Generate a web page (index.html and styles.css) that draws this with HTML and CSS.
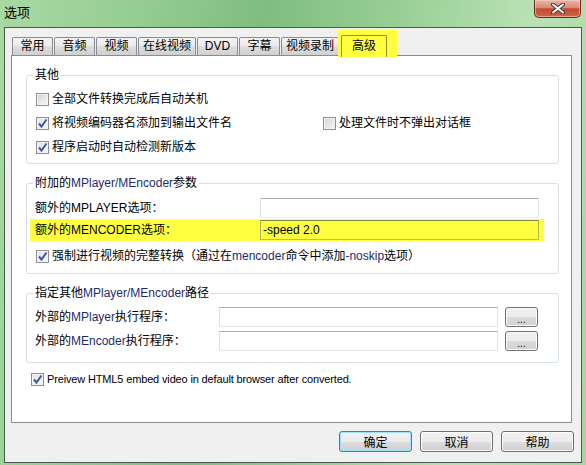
FILE: index.html
```html
<!DOCTYPE html>
<html lang="zh-CN">
<head>
  <meta charset="UTF-8" />
  <title>选项</title>
  <link rel="stylesheet" href="styles.css">
</head>
<body>
  <div class="window">
    <div class="titlebar">
      <span class="title">选项</span>
      <button class="close" aria-label="关闭">
        <svg width="14" height="11" viewBox="0 0 14 11">
          <path d="M2 1.5 L12 9.5 M12 1.5 L2 9.5" stroke="#3d3d3d" stroke-width="4" stroke-linecap="round"/>
          <path d="M2 1.5 L12 9.5 M12 1.5 L2 9.5" stroke="#fff" stroke-width="2" stroke-linecap="round"/>
        </svg>
      </button>
    </div>

    <div class="client">
      <div class="tabs">
        <span class="tab">常用</span>
        <span class="tab">音频</span>
        <span class="tab">视频</span>
        <span class="tab">在线视频</span>
        <span class="tab">DVD</span>
        <span class="tab">字幕</span>
        <span class="tab">视频录制</span>
        <span class="tab-hl"><span class="tab active">高级</span></span>
      </div>

      <div class="page">
        <fieldset class="group group-other">
          <legend>其他</legend>
          <label class="check"><span class="cb"></span>全部文件转换完成后自动关机</label>
          <div class="two-col">
            <label class="check"><span class="cb on"><svg width="11" height="11" viewBox="0 0 11 11"><path d="M2 5.5 L4.5 8.5 L9.5 1.5" fill="none" stroke="#3a5ba0" stroke-width="2"/></svg></span>将视频编码器名添加到输出文件名</label>
            <label class="check"><span class="cb"></span>处理文件时不弹出对话框</label>
          </div>
          <label class="check"><span class="cb on"><svg width="11" height="11" viewBox="0 0 11 11"><path d="M2 5.5 L4.5 8.5 L9.5 1.5" fill="none" stroke="#3a5ba0" stroke-width="2"/></svg></span>程序启动时自动检测新版本</label>
        </fieldset>

        <fieldset class="group group-args">
          <legend>附加的<span class="lat">MPlayer/MEncoder</span>参数</legend>
          <div class="opt-row">
            <span>额外的MPLAYER选项：</span>
            <input class="field" type="text" value="">
          </div>
          <div class="opt-row hl">
            <span>额外的MENCODER选项：</span>
            <input class="field" type="text" value="-speed 2.0">
          </div>
          <label class="check check-gap"><span class="cb on"><svg width="11" height="11" viewBox="0 0 11 11"><path d="M2 5.5 L4.5 8.5 L9.5 1.5" fill="none" stroke="#3a5ba0" stroke-width="2"/></svg></span><span>强制进行视频的完整转换（通过在<span class="lat">mencoder</span>命令中添加<span class="lat">-noskip</span>选项）</span></label>
        </fieldset>

        <fieldset class="group group-paths">
          <legend>指定其他<span class="lat">MPlayer/MEncoder</span>路径</legend>
          <div class="path-row">
            <span class="path-label">外部的<span class="lat">MPlayer</span>执行程序：</span>
            <input class="field" type="text" value="">
            <button class="browse">...</button>
          </div>
          <div class="path-row">
            <span class="path-label">外部的<span class="lat">MEncoder</span>执行程序：</span>
            <input class="field" type="text" value="">
            <button class="browse">...</button>
          </div>
        </fieldset>

        <label class="check preview"><span class="cb on"><svg width="11" height="11" viewBox="0 0 11 11"><path d="M2 5.5 L4.5 8.5 L9.5 1.5" fill="none" stroke="#3a5ba0" stroke-width="2"/></svg></span>Preivew HTML5 embed video in default browser after converted.</label>
      </div>

      <div class="actions">
        <button class="btn default">确定</button>
        <button class="btn">取消</button>
        <button class="btn">帮助</button>
      </div>
    </div>
  </div>
</body>
</html>
```

FILE: styles.css
```css
* {
  margin: 0;
  padding: 0;
  box-sizing: border-box;
}

body {
  width: 586px;
  height: 465px;
  overflow: hidden;
  font-family: "Liberation Sans", "Noto Sans CJK SC", sans-serif;
  font-size: 12px;
  line-height: 14px;
  color: #000;
  background: linear-gradient(100deg, #a9d9a3 0%, #94cc91 22%, #7fbd80 40%, #98cf95 60%, #b9e2b4 80%, #a4d69f 100%);
}

.window {
  display: flex;
  flex-direction: column;
  height: 465px;
}

/* title bar */
.titlebar {
  height: 27px;
  display: flex;
  justify-content: space-between;
  align-items: flex-start;
  padding: 0 5px 0 4px;
}

.title {
  margin-top: 5px;
  font-size: 13px;
  font-family: "Noto Sans CJK SC", sans-serif;
}

.close {
  width: 47px;
  height: 18px;
  border: 1px solid #6e2a1f;
  border-top: none;
  border-radius: 0 0 5px 5px;
  background: linear-gradient(#eab4a7, #dc8a74 45%, #c4492f 52%, #d0654a 100%);
  box-shadow: inset 0 0 0 1px rgba(255, 220, 210, 0.5);
  display: flex;
  align-items: center;
  justify-content: center;
}

/* client area */
.client {
  flex: 1;
  margin: 0 4px 2px;
  border: 1px solid #4b5a4e;
  background: #f0f0f0;
  padding: 2px 0 0 6px;
  display: flex;
  flex-direction: column;
}

.tabs {
  display: flex;
  align-items: flex-end;
  height: 25px;
  padding-left: 1px;
  gap: 1px;
}

.tab {
  height: 18px;
  min-width: 41px;
  padding: 0 4px;
  border: 1px solid #898c95;
  border-bottom: none;
  border-radius: 2px 2px 0 0;
  background: linear-gradient(#f3f3f3, #ebebeb 45%, #dedede 50%, #d0d0d0);
  text-align: center;
  line-height: 17px;
}

.tab-hl {
  position: relative;
  z-index: 1;
  height: 27px;
  margin: 0 0 -2px -2px;
  padding: 0 10px 0 3px;
  background: #ffff40;
  display: flex;
  align-items: flex-end;
}

.tab.active {
  height: 22px;
  min-width: 46px;
  background: transparent;
  border-color: #8f8f2a;
  line-height: 20px;
}

.page {
  width: 561px;
  height: 368px;
  border: 1px solid #898c95;
  background: #fff;
  padding-left: 14px;
}

/* groups */
.group {
  width: 533px;
  border: 1px solid #d5dfe5;
  border-radius: 3px;
  padding: 6px 0 4px 8px;
  margin-top: 13px;
}

.group legend {
  margin-left: -2px;
  padding: 0 2px;
  line-height: 12px;
}

.group-args {
  padding-top: 7px;
  padding-bottom: 5px;
}

.group-paths {
  padding-bottom: 9px;
}

.lat {
  color: #1d2b6e;
}

.check {
  display: flex;
  align-items: center;
  gap: 3px;
  height: 24px;
  padding-left: 1px;
  white-space: nowrap;
}

.check-gap {
  margin-top: 3px;
}

.two-col {
  display: grid;
  grid-template-columns: 287px auto;
}

.cb {
  width: 13px;
  height: 13px;
  flex: none;
  border: 1px solid #8e8f8f;
  background: linear-gradient(135deg, #d0d2d6, #f8f8f8);
  box-shadow: inset 0 0 0 1px #f4f4f4;
  display: flex;
  align-items: center;
  justify-content: center;
}

.cb.on {
  background: linear-gradient(135deg, #dfe1e5, #fbfbfb);
}

.opt-row {
  display: grid;
  grid-template-columns: 225px 279px;
  align-items: center;
  height: 23px;
  margin-left: -5px;
  padding: 0 5px;
  width: max-content;
}

.opt-row.hl {
  height: 22px;
  background: #ffff40;
}

.field {
  height: 20px;
  border: 1px solid;
  border-color: #abadb3 #e2e3ea #e3e9ef #dbdfe6;
  background: #fff;
  font: inherit;
  padding: 0 2px;
  outline: none;
}

.opt-row.hl .field {
  background: #ffff40;
  border-color: #7f8f30 #a9b55a #b4bd68 #a9b55a;
}

.path-row {
  display: flex;
  align-items: center;
  height: 24px;
}

.path-label {
  width: 184px;
}

.path-row .field {
  width: 279px;
}

.browse {
  width: 33px;
  height: 20px;
  margin-left: 7px;
  border: 1px solid #707070;
  border-radius: 3px;
  background: linear-gradient(#f2f2f2, #ebebeb 50%, #dddddd 50%, #cfcfcf);
  box-shadow: inset 0 0 0 1px #fbfbfb;
  font-family: "Liberation Sans", sans-serif;
  font-size: 10px;
  line-height: 20px;
  padding-top: 2px;
}

.preview {
  height: 16px;
  margin: 8px 0 0 5px;
  padding-left: 0;
  font-size: 11px;
  letter-spacing: -0.15px;
}

/* dialog buttons */
.actions {
  display: flex;
  justify-content: flex-end;
  gap: 8px;
  margin-top: 8px;
  padding-right: 7px;
}

.btn {
  width: 73px;
  height: 21px;
  border: 1px solid #707070;
  border-radius: 3px;
  background: linear-gradient(#f2f2f2, #ebebeb 50%, #dddddd 50%, #cfcfcf);
  box-shadow: inset 0 0 0 1px #fcfcfc;
  font: inherit;
  font-family: "Noto Sans CJK SC", sans-serif;
  color: #000;
}

.btn.default {
  border-color: #3c7fb1;
  box-shadow: inset 0 0 0 1px #9ee0fb;
}
```
